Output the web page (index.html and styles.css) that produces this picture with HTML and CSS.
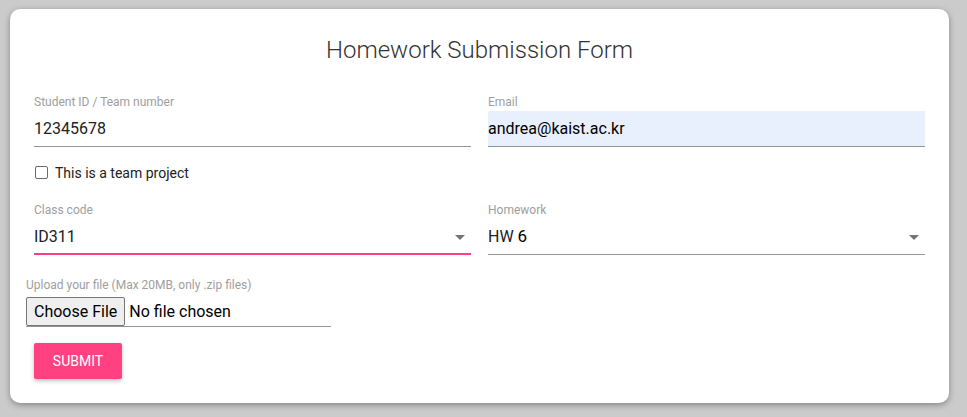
FILE: index.html
```html
<!DOCTYPE html>
<html>
<head>
<meta charset="utf-8">
<link rel="stylesheet" href="styles.css">
</head>
<body>
<div class="card">
  <h1 class="title">Homework Submission Form</h1>
  <div class="row row-first">
    <div class="field">
      <div class="label">Student ID / Team number</div>
      <div class="input">12345678</div>
    </div>
    <div class="field">
      <div class="label">Email</div>
      <div class="input input-filled">andrea@kaist.ac.kr</div>
    </div>
  </div>
  <div class="check-row">
    <span class="checkbox"></span>
    <span class="check-label">This is a team project</span>
  </div>
  <div class="row row-second">
    <div class="field">
      <div class="label">Class code</div>
      <div class="input select select-focused">ID311<span class="caret"></span></div>
    </div>
    <div class="field">
      <div class="label">Homework</div>
      <div class="input select">HW <span class="hw-num">6</span><span class="caret"></span></div>
    </div>
  </div>
  <div class="upload">
    <div class="label">Upload your file (Max 20MB, only .zip files)</div>
    <div class="file">
      <span class="file-btn">Choose File</span>
      <span class="file-text">No file chosen</span>
    </div>
  </div>
  <button class="submit">SUBMIT</button>
</div>
</body>
</html>
```
FILE: styles.css
```css
html, body {
  margin: 0;
  padding: 0;
}
body {
  background: #cbcbcb;
  font-family: Roboto, "Liberation Sans", sans-serif;
  height: 417px;
  overflow: hidden;
  padding-top: 9px;
  padding-left: 10px;
  box-sizing: border-box;
}
.card {
  width: 939px;
  height: 394px;
  background: #fff;
  border-radius: 10px;
  box-shadow: 0 2px 6px rgba(0, 0, 0, 0.35);
  padding: 0 24px;
  box-sizing: border-box;
  overflow: hidden;
}
.title {
  margin: 0;
  padding-top: 27px;
  text-align: center;
  font-size: 24px;
  line-height: 28px;
  font-weight: 300;
  color: #333;
}
.row {
  display: flex;
  gap: 17px;
}
.row-first {
  margin-top: 31px;
}
.row-second {
  margin-top: 23px;
}
.field {
  flex: 1;
}
.label {
  font-size: 12px;
  line-height: 14px;
  color: #9e9e9e;
}
.input {
  margin-top: 2px;
  height: 35px;
  line-height: 35px;
  font-size: 16px;
  color: #212121;
  border-bottom: 1px solid #949494;
  position: relative;
}
.input-filled {
  background: #e8f0fe;
  color: #000;
}
.select-focused {
  border-bottom: 2px solid #ff4081;
  height: 34px;
}
.hw-num {
  font-weight: 400;
  font-size: 17px;
  color: #000;
}
.caret {
  position: absolute;
  right: 6px;
  top: 16px;
  width: 0;
  height: 0;
  border-left: 5px solid transparent;
  border-right: 5px solid transparent;
  border-top: 5px solid #757575;
}
.check-row {
  display: flex;
  align-items: center;
  margin-top: 18px;
  height: 15px;
}
.checkbox {
  width: 11px;
  height: 11px;
  border: 1px solid #6b6b6b;
  border-radius: 2px;
  margin-left: 1px;
  margin-right: 7px;
}
.check-label {
  font-size: 14px;
  color: #212121;
}
.upload {
  margin-left: -8px;
  margin-top: 23px;
}
.file {
  display: flex;
  align-items: center;
  width: 305px;
  margin-top: 5px;
  border-bottom: 1px solid #949494;
  height: 29px;
  box-sizing: content-box;
}
.file-btn {
  height: 29px;
  box-sizing: border-box;
  background: #efefef;
  border: 1px solid #767676;
  border-radius: 2px;
  padding: 0 7px;
  font-size: 16px;
  line-height: 27px;
  color: #000;
}
.file-text {
  font-size: 16px;
  color: #000;
  margin-left: 4px;
}
.submit {
  display: block;
  margin-top: 16px;
  width: 88px;
  height: 36px;
  border: 0;
  border-radius: 2px;
  background: #ff4081;
  color: #fff;
  font-family: Roboto, "Liberation Sans", sans-serif;
  font-size: 14px;
  font-weight: 400;
  padding: 0;
  box-shadow: 0 2px 4px rgba(0, 0, 0, 0.25);
}
```
